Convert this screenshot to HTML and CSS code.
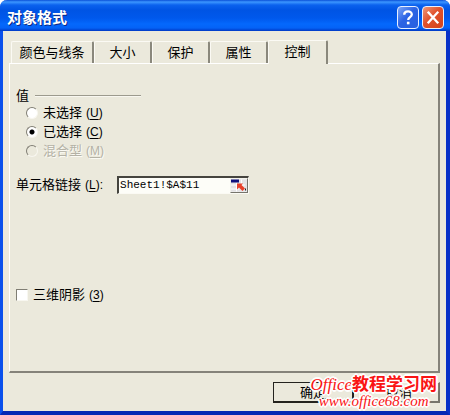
FILE: index.html
```html
<!DOCTYPE html>
<html lang="zh-CN">
<head>
    <meta charset="UTF-8">
    <meta name="viewport" content="width=device-width, initial-scale=1.0">
    <title>对象格式</title>
    <link rel="stylesheet" href="styles.css">
</head>
<body>
    <main class="janela">
        <header class="titulo">
            <h1>对象格式</h1>
            <button type="button" class="icone ajuda" aria-label="帮助">
                <svg viewBox="0 0 20 20"><path d="M6.2 7.2C6.2 2.8 13.8 2.8 13.8 7C13.8 9.6 10.2 9.7 10.2 12.5" fill="none" stroke="#fff" stroke-width="2.3"/><rect x="8.9" y="14.2" width="2.6" height="2.6" fill="#fff"/></svg>
            </button>
            <button type="button" class="icone fechar" aria-label="关闭">
                <svg viewBox="0 0 20 20"><path d="M5.5 5L14.5 15M14.5 5L5.5 15" stroke="#fff" stroke-width="2.3" stroke-linecap="square"/></svg>
            </button>
        </header>
        <form class="corpo">
            <div class="abas" role="tablist">
                <button type="button" class="aba larga" role="tab">颜色与线条</button>
                <button type="button" class="aba" role="tab">大小</button>
                <button type="button" class="aba" role="tab">保护</button>
                <button type="button" class="aba" role="tab">属性</button>
                <button type="button" class="aba ativa" role="tab" aria-selected="true">控制</button>
            </div>
            <section class="painel">
                <div class="grupo">
                    <span>值</span>
                    <hr>
                </div>
                <div class="opcoes" role="radiogroup" aria-label="值">
                    <div class="linha">
                        <input type="radio" name="valor" id="nao">
                        <label for="nao">未选择<span class="tecla">(<u>U</u>)</span></label>
                    </div>
                    <div class="linha">
                        <input type="radio" name="valor" id="sim" checked>
                        <label for="sim">已选择<span class="tecla">(<u>C</u>)</span></label>
                    </div>
                    <div class="linha">
                        <input type="radio" name="valor" id="misto" disabled>
                        <label for="misto">混合型<span class="tecla">(<u>M</u>)</span></label>
                    </div>
                </div>
                <div class="vinculo">
                    <label for="celula">单元格链接<span class="tecla">(<u>L</u>):</span></label>
                    <div class="campo">
                        <input type="text" id="celula" value="Sheet1!$A$11">
                        <button type="button" class="seletor" aria-label="选择单元格">
                            <svg viewBox="0 0 16 12"><rect width="16" height="12" fill="#e4e2e4"/><path d="M0 5.5H14M0 9.5H8M5.5 3V12M10.5 0V6" stroke="#fff" stroke-width="1"/><rect width="8" height="3" fill="#10107c"/><path d="M6 4H12L10.5 5.5L14 9L11.5 11.5L8 8L6 10Z" fill="#e8402a"/><rect x="14" y="9" width="1" height="2" fill="#222"/></svg>
                        </button>
                    </div>
                </div>
                <div class="linha sombra">
                    <input type="checkbox" id="sombra">
                    <label for="sombra">三维阴影<span class="tecla">(<u>3</u>)</span></label>
                </div>
            </section>
            <div class="botoes">
                <button type="submit" class="botao padrao">确定</button>
                <button type="button" class="botao">取消</button>
            </div>
        </form>
        <div class="marca">
            <div class="marca-nome"><i>Office</i><b>教程学习网</b></div>
            <div class="marca-site">www.office68.com</div>
        </div>
    </main>
</body>
</html>
```

FILE: styles.css
```css
*{
    box-sizing: border-box;
    margin: 0;
    padding: 0;
}
body{
    background-color: white;
    color: black;
    font-family: "Liberation Sans", "Noto Sans CJK SC", sans-serif;
    font-size: 13px;
    line-height: 19px;
}
button, input{
    font: inherit;
    color: inherit;
}
svg{
    display: block;
    width: 100%;
    height: 100%;
}
.janela{
    position: relative;
    min-height: 100vh;
    display: flex;
    flex-direction: column;
    background-color: #ebe9dc;
    border: solid #0a50ec;
    border-width: 0 4px 4px 3px;
    border-right-color: #0831c8;
    border-bottom-color: #0428b4;
    border-radius: 7px 7px 0 0;
}
.titulo{
    height: 31px;
    margin: 0 -4px 0 -3px;
    padding: 3px 6px 0 7px;
    display: flex;
    align-items: center;
    gap: 3px;
    border-radius: 7px 7px 0 0;
    background: linear-gradient(#0a50d8 0, #3c96ff 2px, #0b62ee 5px, #0054e4 10px, #0058ec 18px, #0468fc 24px, #0462f6 28px, #0038c4 31px);
}
h1{
    flex: 1;
    color: white;
    font-size: 15px;
    font-weight: bold;
    text-shadow: 1px 1px #0a2a88;
}
.icone{
    width: 22px;
    height: 23px;
    border: solid #e8f0ff 1px;
    border-radius: 4px;
}
.ajuda{
    background: linear-gradient(135deg, #7ca6f8, #2c64e4 45%, #2860e0);
}
.fechar{
    background: linear-gradient(135deg, #f09878, #e0512c 45%, #d4441c);
}
.corpo{
    flex: 1;
    display: flex;
    flex-direction: column;
    padding: 9px 6px 8px;
}
.abas{
    display: flex;
    align-items: flex-end;
    padding-left: 2px;
}
.aba{
    width: 58px;
    height: 22px;
    background-color: #ebe9dc;
    border: solid;
    border-width: 1px 2px 0 1px;
    border-color: #fbfaf4 #8a887c #fbfaf4 #fbfaf4;
    border-radius: 2px 2px 0 0;
}
.larga{
    width: 83px;
}
.ativa{
    position: relative;
    width: 60px;
    height: 24px;
    margin-bottom: -1px;
    padding-bottom: 2px;
}
.painel{
    flex: 1;
    padding: 22px 6px;
    border: solid;
    border-width: 1px 2px 2px 1px;
    border-color: white #85837a #85837a white;
}
.grupo{
    display: flex;
    align-items: center;
    gap: 6px;
    width: 125px;
}
hr{
    flex: 1;
    border: solid;
    border-width: 1px 0;
    border-color: #9c9a8e #f8f7f0 #f8f7f0;
}
.opcoes{
    padding-left: 10px;
    margin-top: -2px;
}
.linha{
    display: flex;
    align-items: center;
    gap: 5px;
}
.tecla{
    font-size: 12px;
    line-height: 1;
    margin-left: 4px;
}
u{
    text-underline-offset: 2px;
}
input[type="radio"], input[type="checkbox"]{
    appearance: none;
    width: 12px;
    height: 12px;
    background-color: white;
    border: solid 1px;
    border-color: #807e74 #f8f7f0 #f8f7f0 #807e74;
}
input[type="radio"]{
    border-radius: 50%;
}
input[type="radio"]:checked{
    background: radial-gradient(circle, black 2px, white 3px);
}
input:disabled{
    background-color: #ebe9dc;
}
input:disabled + label{
    color: #b4b2a6;
    text-shadow: 1px 1px #fbfaf4;
}
.vinculo{
    display: flex;
    align-items: center;
    gap: 14px;
    margin-top: 15px;
}
.campo{
    display: flex;
    width: 132px;
    height: 18px;
    background-color: #fdfdf8;
    border: solid;
    border-width: 2px 1px 1px 2px;
    border-color: #45443e #fbfaf4 #fbfaf4 #45443e;
}
.campo input{
    flex: 1;
    min-width: 0;
    padding-left: 1px;
    border: none;
    outline: none;
    background: none;
    font-family: "Liberation Mono", monospace;
    font-size: 11px;
}
.seletor{
    width: 18px;
    border: solid 1px;
    border-color: #f4f3ec #77756c #77756c #f4f3ec;
}
.sombra{
    margin-top: 91px;
}
.botoes{
    display: flex;
    justify-content: flex-end;
    gap: 5px;
    margin-top: 9px;
}
.botao{
    width: 81px;
    height: 21px;
    background-color: #ebe9dc;
    border: solid;
    border-width: 1px 2px 2px 1px;
    border-color: #fbfaf4 #77756c #77756c #fbfaf4;
}
.padrao{
    border-color: #24231e;
}
/* marca d'água por cima dos botões */
.marca{
    position: absolute;
    right: 9px;
    bottom: 2px;
    color: #fa1414;
    text-align: center;
    font-family: "Liberation Serif", "Noto Sans CJK SC", serif;
    line-height: 16px;
    white-space: nowrap;
    text-shadow: 1px 1px white, -1px -1px white, 1px -1px white, -1px 1px white, 2px 0 white, -2px 0 white, 0 2px white, 0 -2px white;
    pointer-events: none;
}
.marca-nome{
    font-size: 17px;
}
.marca-site{
    font-size: 15px;
    font-style: italic;
}
```
